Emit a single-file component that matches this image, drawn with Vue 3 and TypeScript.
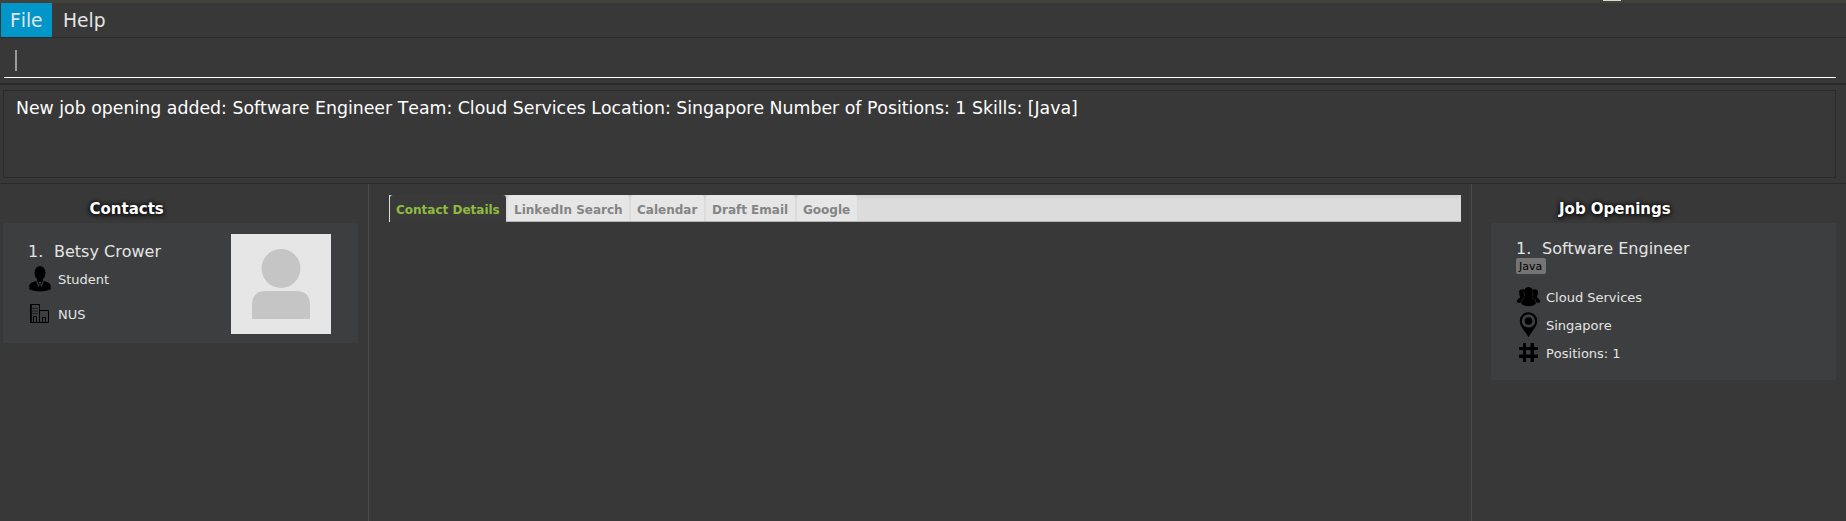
<script setup lang="ts">
interface Tab {
  label: string
  width: number
}

const menus: string[] = ['File', 'Help']
const result =
  'New job opening added: Software Engineer Team: Cloud Services Location: Singapore Number of Positions: 1 Skills: [Java]'
const tabs: Tab[] = [
  { label: 'Contact Details', width: 116 },
  { label: 'LinkedIn Search', width: 121 },
  { label: 'Calendar', width: 73 },
  { label: 'Draft Email', width: 89 },
  { label: 'Google', width: 60 },
]
</script>

<template>
  <div class="window">
    <div class="strip"><i class="strip-mark"></i></div>
    <nav class="menubar">
      <span v-for="(m, i) in menus" :key="m" class="menu" :class="{ active: i === 0 }">{{ m }}</span>
    </nav>
    <div class="command"><div class="field"><i class="caret"></i></div></div>
    <div class="result-pane"><div class="result"><span class="result-text">{{ result }}</span></div></div>

    <main class="panes">
      <section class="contacts">
        <h2 class="title">Contacts</h2>
        <article class="card contact">
          <div class="info">
            <div class="name"><span class="idx">1.</span>Betsy Crower</div>
            <div class="row student">
              <svg width="24" height="26" viewBox="0 0 24 26">
                <ellipse cx="12" cy="7" rx="5.500" ry="7" />
                <path d="M9 11h6v3.500l6 2.500q1.700 1 1.700 3v3.200Q17.500 25.500 12 25.500T1.300 23.200v-3.200q0-2 1.700-3l6-2.500z" />
                <path d="M8.500 14.500l1.800 5M15.500 14.500l-1.800 5M10.700 16.500h2.600M11.300 17.500l-.8 3M12.700 17.500l.8 3" fill="none" stroke="#55585a" stroke-width=".8" />
              </svg>
              <span>Student</span>
            </div>
            <div class="row school">
              <svg width="24" height="20" viewBox="0 0 24 20">
                <path d="M3 .5h8.500v18H3zM11.500 6.500h9v12h-9z" fill="none" stroke="#000" />
                <path d="M2 0h1.500v19H2z" />
                <path d="M5.500 18.500v-6h3v6M14.500 18.500v-5h3v5" fill="none" stroke="#000" />
                <path d="M4.500 4.500H10.500M4.500 7H10.500M4.500 9.500H10.500" stroke="#000" stroke-dasharray="1 1" />
              </svg>
              <span>NUS</span>
            </div>
          </div>
          <svg class="photo" width="100" height="100" viewBox="0 0 100 100">
            <rect width="100" height="100" fill="#e6e6e6" />
            <circle cx="50" cy="34.500" r="19.400" fill="#c5c5c5" />
            <path d="M21 85V71q0-14 14-14h30q14 0 14 14v14z" fill="#c5c5c5" />
          </svg>
        </article>
      </section>

      <section class="browser">
        <div class="tabs">
          <div
            v-for="(t, i) in tabs"
            :key="t.label"
            class="tab"
            :class="{ selected: i === 0 }"
            :style="{ width: t.width + 'px' }"
          >{{ t.label }}</div>
        </div>
      </section>

      <section class="jobs">
        <h2 class="title">Job Openings</h2>
        <article class="card job">
          <div class="name"><span class="idx">1.</span>Software Engineer</div>
          <div class="tag">Java</div>
          <div class="row">
            <svg width="25" height="26" viewBox="0 0 25 26">
              <path d="M3 7.500q.5-2.300 3.200-2.300T9 7.500v6H4.500q-1.500-2-1.500-6zM22 7.500q-.5-2.300-3.200-2.300T16 7.500v6h4.500q1.500-2 1.500-6z" />
              <path d="M4.500 11.500h16q-.3 2 1.800 3 2 1.200 1.900 3.800-2 .8-4.700.8h-14q-2.700 0-4.700-.8-.1-2.600 1.900-3.800 2.100-1 1.800-3z" />
              <ellipse cx="12.500" cy="8.400" rx="4.700" ry="5.400" />
              <path d="M5.200 20q0-4 4.800-6h5q4.800 2 4.800 6-3 2.200-7.300 2.200T5.200 20z" />
              <path d="M8.500 13.500q-3.500 1.800-3.800 5.500M16.500 13.500q3.500 1.800 3.800 5.500M8 7.500q-.3 3 1 5M17 7.500q.3 3-1 5" fill="none" stroke="#3c3e3f" stroke-width=".6" />
            </svg>
            <span>Cloud Services</span>
          </div>
          <div class="row">
            <svg width="25" height="26" viewBox="0 0 25 26">
              <path fill-rule="evenodd" d="M12.500.2a8.700 8.700 0 0 1 8.700 8.700c0 5.800-5.500 10.300-8.700 16.300-3.200-6-8.700-10.500-8.700-16.300A8.700 8.700 0 0 1 12.500.2zm0 2a6.700 6.700 0 1 0 0 13.400 6.700 6.700 0 0 0 0-13.400z" />
              <circle cx="12.500" cy="9" r="3.800" />
            </svg>
            <span>Singapore</span>
          </div>
          <div class="row">
            <svg width="25" height="26" viewBox="0 0 25 26">
              <path d="M7 3h3v19H7zM14.500 3h3.500v19h-3.500zM3 7h19v3H3zM3 14.500h19V18H3z" />
            </svg>
            <span>Positions: 1</span>
          </div>
        </article>
      </section>
    </main>
  </div>
</template>

<style>
body { background: #383838; overflow: hidden; }
</style>

<style scoped>
.window {
  display: flex;
  flex-direction: column;
  width: 1846px;
  height: 521px;
  background: #383838;
  color: #e4e4e4;
  font-family: "DejaVu Sans", sans-serif;
  font-kerning: none;
  white-space: nowrap;
  overflow: hidden;
}
.window * { box-sizing: border-box; }
svg { display: block; flex: none; }
.strip { height: 3px; background: #43423a; padding-left: 1603px; flex: none; }
.strip-mark { display: block; width: 18px; height: 1px; background: #dddcd0; }
.menubar { display: flex; height: 35px; padding-left: 1px; border-bottom: 1px solid #2a2a2a; flex: none; }
.menu { height: 34px; padding: 0 10px; line-height: 36px; font-size: 18.67px; width: 51px; }
.menu:last-child { padding-left: 11px; }
.menu.active { background: #0096c9; padding-left: 9px; }
.command { height: 47px; padding: 0 10px 0 4px; border-bottom: 2px solid #2a2a2a; flex: none; }
.field { height: 40px; border-bottom: 1px solid #fff; padding: 12px 0 0 11px; }
.caret { display: block; width: 2px; height: 21px; background: #9b9b9b; }
.result-pane { height: 99px; padding: 5px 10px 0 3px; border-bottom: 1px solid #2a2a2a; flex: none; }
.result { height: 88px; border: 1px solid #2a2a2a; padding: 7px 0 0 12px; }
.result-text { display: block; font-size: 17.33px; line-height: 20px; color: #fff; }
.panes { display: flex; flex: 1; }
.contacts { width: 369px; padding: 15px 10px 0 3px; border-right: 1px solid #4b4b4b; }
.browser { flex: 1; padding: 11px 10px 0 20px; }
.jobs { width: 375px; padding: 15px 10px 0 19px; border-left: 1px solid #4b4b4b; }
.title {
  margin: 0 0 4px;
  padding-left: 86.500px;
  font-size: 15px;
  line-height: 20px;
  font-weight: bold;
  color: #fff;
  text-shadow: 0 1px 5px #000, 0 0 4px rgba(0, 0, 0, .7);
}
.jobs .title { padding-left: 68px; }
.card { background: #3c3e3f; }
.contact { display: flex; width: 355px; height: 120px; }
.info { width: 228px; padding: 18px 0 0 25px; }
.photo { margin-top: 11px; }
.name { height: 20px; font-size: 16px; line-height: 22px; }
.idx { display: inline-block; width: 26px; }
.row { display: flex; align-items: center; height: 28px; font-size: 13px; line-height: 28px; }
.row span { padding-top: 2px; }
.student { margin-top: 4px; }
.student svg, .school svg { margin-right: 6px; }
.school { margin-top: 7px; }
.job { width: 345px; height: 157px; padding: 15px 0 0 25px; }
.tag {
  width: 30px;
  height: 16px;
  margin: 0 0 9px;
  padding-left: 3px;
  border-radius: 2px;
  background: #757575;
  color: #000;
  font-size: 11px;
  line-height: 17px;
}
.job .row svg { margin-right: 5px; }
.tabs {
  display: flex;
  gap: 2px;
  height: 27px;
  border-left: 1px solid #dcdcdc;
  background: linear-gradient(#d0d0d0, #dcdcdc 5px);
  box-shadow: inset 0 -1px #b5b5b5;
}
.tab {
  height: 26px;
  padding-left: 6px;
  border-radius: 3px 3px 0 0;
  background: #e6e6e6;
  color: #848484;
  font-size: 12px;
  line-height: 31px;
  font-weight: bold;
}
.tab.selected { height: 27px; background: #3a3a3a; color: #8fbc3f; }
</style>
